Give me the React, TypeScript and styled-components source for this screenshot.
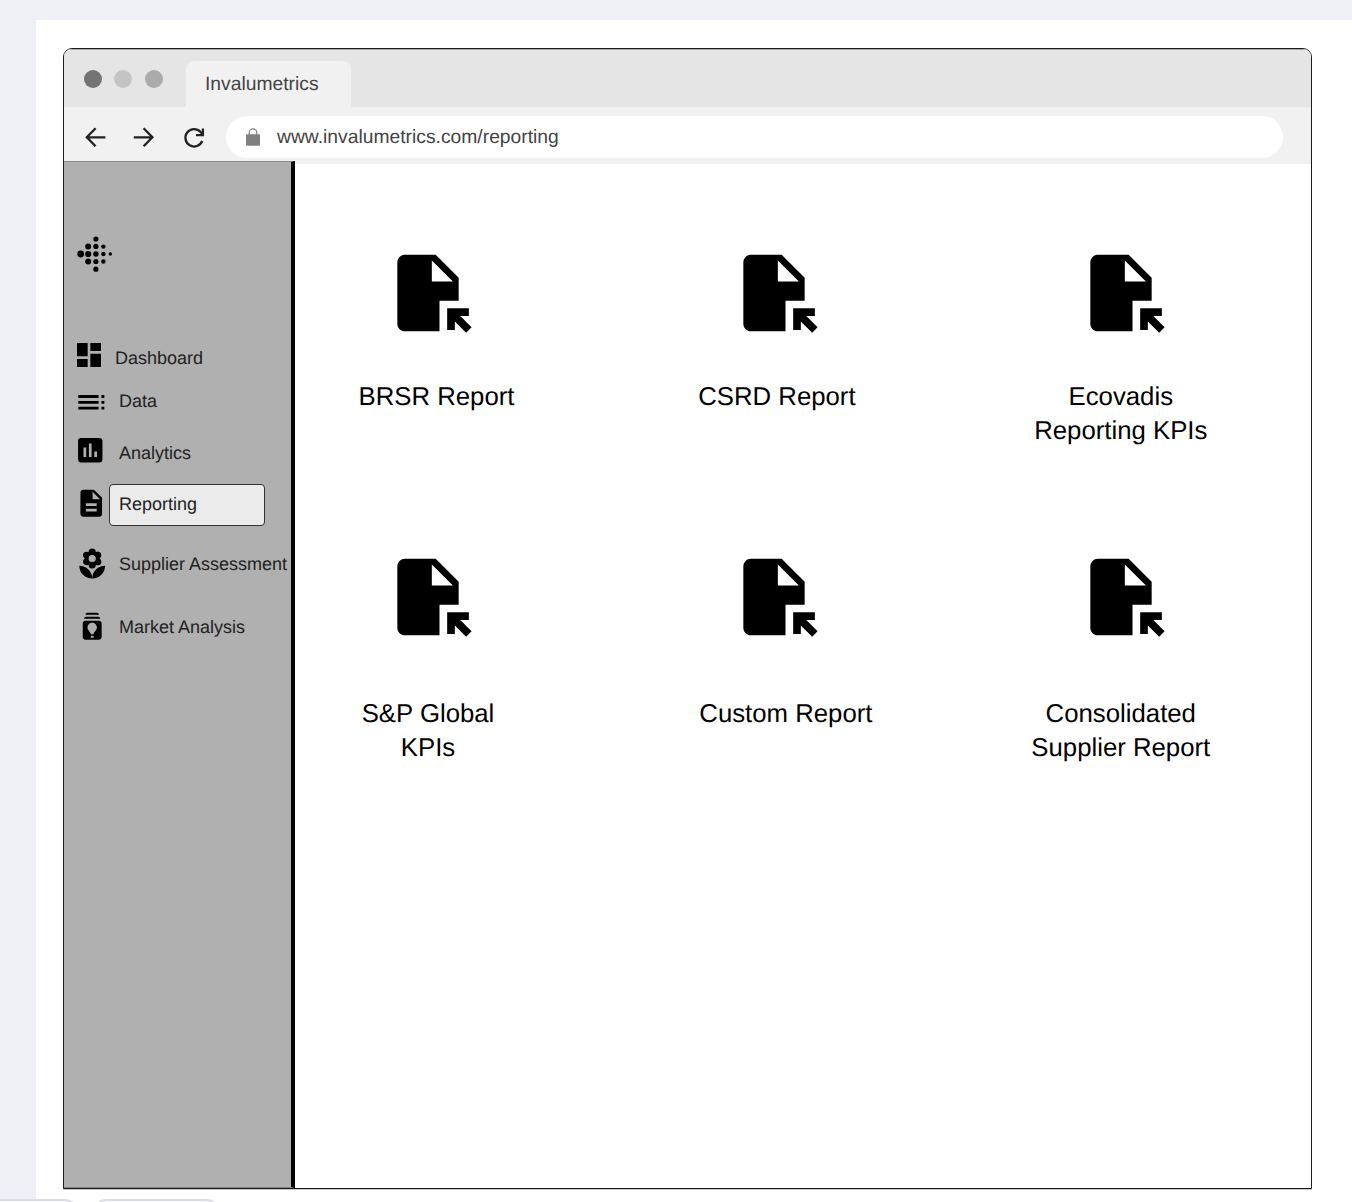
import React from "react";
import styled, { createGlobalStyle } from "styled-components";
import type { IconType } from "react-icons";
import {
  MdBatchPrediction,
  MdDashboard,
  MdDescription,
  MdFileOpen,
  MdInsertChart,
  MdLocalFlorist,
  MdToc,
} from "react-icons/md";

const GlobalStyle = createGlobalStyle`
  * { box-sizing: border-box; }
  body {
    margin: 0;
    background: #eff0f5;
    font-family: "Liberation Sans", Arial, Helvetica, sans-serif;
    text-rendering: geometricPrecision;
    overflow: hidden;
  }
`;

const Page = styled.div`
  display: flex;
  flex-direction: column;
  width: 1352px;
  height: 1202px;
  overflow: hidden;
`;

const Workspace = styled.main`
  display: flex;
  flex: none;
  height: 1199px;
  padding: 20px 0 0 36px;
`;

const Canvas = styled.div`
  flex: 1;
  padding: 28px 40px 0 27px;
  background: #fff;
`;

const BrowserWindow = styled.section`
  display: flex;
  flex-direction: column;
  height: 1141px;
  border: 1px solid #1c1c1c;
  border-radius: 9px 9px 0 0;
  overflow: hidden;
  background: #fff;
  box-shadow: 0 1px 0 #c4c4c4;
`;

const TabStrip = styled.div`
  display: flex;
  align-items: flex-end;
  flex: none;
  height: 58px;
  border-top: 1px solid #a9a9a9;
  background: #e5e5e5;
`;

const WindowDots = styled.div`
  display: flex;
  gap: 12.4px;
  width: 122px;
  height: 37px;
  padding-left: 20px;
`;

const Dot = styled.span<{ $color: string }>`
  width: 18px;
  height: 18px;
  border-radius: 50%;
  background: ${(p) => p.$color};
`;

const Tab = styled.div`
  width: 165px;
  height: 46px;
  padding-left: 19px;
  border-radius: 8px 8px 0 0;
  background: #f1f1f1;
  color: #444;
  font-size: 19.3px;
  line-height: 47px;
`;

const Toolbar = styled.div`
  display: flex;
  align-items: center;
  flex: none;
  height: 54px;
  padding: 5px 28px 0 20px;
  background: #f1f1f1;
`;

const NavIcon = styled.svg<{ $gap: number }>`
  flex: none;
  width: 24px;
  height: 24px;
  margin-right: ${(p) => p.$gap}px;
  fill: none;
  stroke: #222;
  stroke-width: 2.3;
`;

const AddressBar = styled.div`
  display: flex;
  align-items: center;
  flex: 1;
  height: 42px;
  padding-left: 20px;
  border-radius: 21px;
  background: #fff;
  color: #444;
  font-size: 19.3px;
`;

const Url = styled.span`
  padding-top: 2px;
`;

const LockIcon = styled.svg`
  width: 14px;
  height: 18px;
  margin-right: 17px;
`;

const Body = styled.div`
  display: flex;
  flex: 1;
  min-height: 0;
`;

const Sidebar = styled.nav`
  flex: none;
  width: 231px;
  padding: 72px 0 0 13px;
  border-top: 1px solid #8b8b8b;
  border-right: 4px solid #000;
  border-bottom: 1px solid #858585;
  background: #b0b0b0;
`;

const Logo = styled.svg`
  display: block;
  width: 36px;
  height: 40px;
`;

const Menu = styled.ul`
  display: flex;
  flex-direction: column;
  margin: 61px 0 0;
  padding: 0;
  list-style: none;
`;

const MenuRow = styled.li<{ $height: number }>`
  display: flex;
  align-items: center;
  height: ${(p) => p.$height}px;
`;

const IconSlot = styled.span<{ $x: number; $lift: number }>`
  display: flex;
  flex: none;
  justify-content: center;
  width: 32px;
  margin-left: ${(p) => p.$x}px;
  margin-right: ${(p) => -p.$x}px;
  padding-bottom: ${(p) => Math.max(0, p.$lift * 2)}px;
  padding-top: ${(p) => Math.max(0, -p.$lift * 2)}px;
`;

const MenuLabel = styled.span<{ $indent: number; $active?: boolean }>`
  flex: none;
  width: ${(p) => (p.$active ? "156px" : "auto")};
  height: 42px;
  margin-left: ${(p) => p.$indent - (p.$active ? 10 : 0)}px;
  padding-left: ${(p) => (p.$active ? 9 : 0)}px;
  border: ${(p) => (p.$active ? "1.3px solid #333" : "0")};
  border-radius: 4px;
  background: ${(p) => (p.$active ? "#ebebeb" : "transparent")};
  color: #222;
  font-size: 18px;
  line-height: ${(p) => (p.$active ? 39 : 42)}px;
  white-space: nowrap;
`;

const Content = styled.div`
  flex: 1;
  display: grid;
  grid-template-columns: repeat(3, 200px);
  grid-auto-rows: 304px;
  column-gap: 146.4px;
  padding: 83px 0 0 33px;
  border-top: 3px solid #f1f1f1;
`;

const ReportCard = styled.article`
  display: flex;
  flex-direction: column;
  align-items: center;
`;

const ReportTitle = styled.h2<{ $gap: number; $shift: number }>`
  margin: ${(p) => p.$gap}px 0 0 ${(p) => p.$shift * 2}px;
  color: #000;
  font-size: 25.75px;
  font-weight: 400;
  line-height: 34px;
  text-align: center;
  white-space: pre;
`;

const BottomBar = styled.footer`
  display: flex;
  gap: 17px;
  height: 3px;
  overflow: hidden;
  background: #fff;
`;

const BottomTab = styled.div<{ $width: number; $first?: boolean }>`
  flex: none;
  width: ${(p) => p.$width}px;
  height: 30px;
  border: 2px solid #dcdce5;
  border-left-width: ${(p) => (p.$first ? 0 : 2)}px;
  border-radius: ${(p) => (p.$first ? "0 12px 12px 0" : "12px")};
  background: #f9f9fc;
`;

interface MenuEntry {
  label: string;
  icon: IconType;
  size: number;
  height: number;
  x: number;
  lift: number;
  indent: number;
  active?: boolean;
}

const menu: MenuEntry[] = [
  { label: "Dashboard", icon: MdDashboard, size: 32, height: 46, x: -4, lift: 3, indent: 6 },
  { label: "Data", icon: MdToc, size: 34.7, height: 40, x: -2, lift: -1.5, indent: 10 },
  { label: "Analytics", icon: MdInsertChart, size: 32.5, height: 63, x: -3.2, lift: 2.5, indent: 10 },
  { label: "Reporting", icon: MdDescription, size: 32.5, height: 41, x: -2, lift: 1.5, indent: 10, active: true },
  { label: "Supplier Assessment", icon: MdLocalFlorist, size: 34.4, height: 77, x: -1, lift: -0.7, indent: 10 },
  { label: "Market Analysis", icon: MdBatchPrediction, size: 32.4, height: 49, x: -1.3, lift: 0.5, indent: 10 },
];

const reports = [
  { title: "BRSR Report", gap: 41, shift: 8.5 },
  { title: "CSRD Report", gap: 41, shift: 2.5 },
  { title: "Ecovadis\nReporting KPIs", gap: 41, shift: 0 },
  { title: "S&P Global\nKPIs", gap: 54, shift: 0 },
  { title: "Custom Report", gap: 54, shift: 11.5 },
  { title: "Consolidated\nSupplier Report", gap: 54, shift: 0 },
];

const logoDots = [
  [3.7, 20, 3.4],
  [11.2, 12.4, 3], [11.2, 20, 3.1], [11.2, 27.5, 3],
  [18.9, 5, 2.6], [18.9, 12.4, 2.6], [18.9, 20, 2.7], [18.9, 27.5, 2.6], [18.9, 35.2, 2.6],
  [26.4, 12.6, 2.2], [26.4, 20, 2.2], [26.4, 27.5, 2.2],
  [33.3, 20, 1.7],
];

export default function App() {
  return (
    <Page>
      <GlobalStyle />
      <Workspace>
        <Canvas>
          <BrowserWindow>
            <TabStrip>
              <WindowDots>
                <Dot $color="#737373" />
                <Dot $color="#c4c4c4" />
                <Dot $color="#ababab" />
              </WindowDots>
              <Tab>Invalumetrics</Tab>
            </TabStrip>
            <Toolbar>
              <NavIcon $gap={24} viewBox="0 0 24 24">
                <path d="M21.4 12.3H3M11.6 3.3L2.8 12.3l8.8 9" />
              </NavIcon>
              <NavIcon $gap={26} viewBox="0 0 24 24">
                <path d="M1.8 12.3h18.4M11.6 3.3l8.8 9-8.8 9" />
              </NavIcon>
              <NavIcon $gap={20} viewBox="0 0 24 24">
                <path d="M20.2 16A8.7 8.7 0 1 1 18.6 7L21 9.6" />
                <path d="M20.9 3.5v6.6h-6.9" />
              </NavIcon>
              <AddressBar>
                <LockIcon viewBox="0 0 14 18">
                  <path d="M3.2 8V4.7a3.8 3.8 0 0 1 7.6 0V8" fill="none" stroke="#808080" strokeWidth="1.2" />
                  <rect y="6.3" width="14" height="11.4" rx="1" fill="#808080" />
                </LockIcon>
                <Url>www.invalumetrics.com/reporting</Url>
              </AddressBar>
            </Toolbar>
            <Body>
              <Sidebar>
                <Logo viewBox="0 0 36 40">
                  {logoDots.map(([cx, cy, r]) => (
                    <circle key={`${cx}-${cy}`} cx={cx} cy={cy} r={r} />
                  ))}
                </Logo>
                <Menu>
                  {menu.map(({ label, icon: Icon, size, height, x, lift, indent, active }) => (
                    <MenuRow key={label} $height={height}>
                      <IconSlot $x={x} $lift={lift}>
                        <Icon size={size} style={{ flex: "none" }} />
                      </IconSlot>
                      <MenuLabel $indent={indent} $active={active}>
                        {label}
                      </MenuLabel>
                    </MenuRow>
                  ))}
                </Menu>
              </Sidebar>
              <Content>
                {reports.map(({ title, gap, shift }) => (
                  <ReportCard key={title}>
                    <MdFileOpen size={92} />
                    <ReportTitle $gap={gap} $shift={shift}>
                      {title}
                    </ReportTitle>
                  </ReportCard>
                ))}
              </Content>
            </Body>
          </BrowserWindow>
        </Canvas>
      </Workspace>
      <BottomBar>
        <BottomTab $width={77} $first />
        <BottomTab $width={125} />
      </BottomBar>
    </Page>
  );
}
